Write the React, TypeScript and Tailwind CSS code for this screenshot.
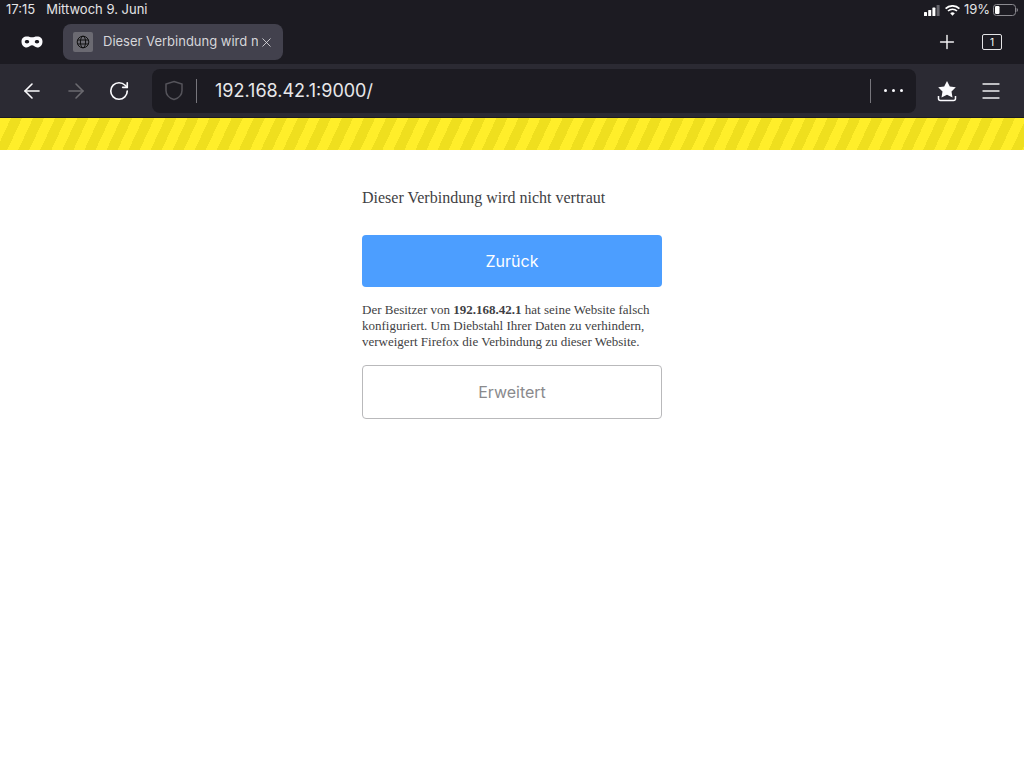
import { ArrowLeft, ArrowRight, Menu, Plus, RotateCw, X } from 'lucide-react';

const uiFont = "font-['Inter','Liberation_Sans',sans-serif]";
const serifFont = "font-['Liberation_Serif',serif]";

function StatusIcons() {
    return (
        <div className="flex items-center">
            {/* signal */}
            <svg width="16" height="11" viewBox="0 0 16 11" className="mr-[5px]">
                <rect x="0" y="7" width="3" height="4" rx="0.6" fill="#fff" />
                <rect x="4.2" y="5" width="3" height="6" rx="0.6" fill="#fff" />
                <rect x="8.4" y="2.6" width="3" height="8.4" rx="0.6" fill="#fff" />
                <rect x="12.6" y="0" width="3" height="11" rx="0.6" fill="#66656c" />
            </svg>
            {/* wifi */}
            <svg width="15" height="11" viewBox="0 0 15 11" className="mr-[4px]">
                <path d="M0.6 3.6a10 10 0 0 1 13.8 0" fill="none" stroke="#fff" strokeWidth="1.7" />
                <path d="M3 6a6.6 6.6 0 0 1 9 0" fill="none" stroke="#fff" strokeWidth="1.7" />
                <path d="M5.2 8.2a3.4 3.4 0 0 1 4.6 0L7.5 10.8z" fill="#fff" />
            </svg>
            <span className="text-[13px] text-[#e4e4e6] mr-[3px]">19%</span>
            {/* battery */}
            <svg width="25" height="12" viewBox="0 0 25 12">
                <rect x="0.5" y="0.5" width="22" height="11" rx="3" fill="none" stroke="#8b8a90" />
                <rect x="2" y="2" width="4.5" height="8" rx="1.2" fill="#fff" />
                <path d="M23.6 4v4c.8-.3 1.3-1.1 1.3-2s-.5-1.700-1.300-2z" fill="#8b8a90" />
            </svg>
        </div>
    );
}

function TopBars() {
    return (
        <header className={`${uiFont} text-white`}>
            {/* status bar + tab strip */}
            <div className="bg-[#1c1b22] h-[64px] flex flex-col">
                <div className="h-[20px] pl-[6px] pr-[6px] flex items-center justify-between text-[13px] text-[#e4e4e6]">
                    <div className="flex gap-[11px]">
                        <span>17:15</span>
                        <span>Mittwoch 9. Juni</span>
                    </div>
                    <StatusIcons />
                </div>
                <div className="flex items-start pt-[4px] pl-[21px] pr-[22px]">
                    <svg width="22" height="12" viewBox="0 0 22 12" className="mt-[12px]">
                        <path
                            fillRule="evenodd"
                            d="M6 .5c2 0 3.500.8 5 .8s3-.8 5-.8c3.500 0 5.500 2 5.500 5 0 3.500-2.200 6-5.200 6-2.300 0-3.700-2.200-5.300-2.200S8 11.500 5.700 11.500C2.700 11.500.5 9 .5 5.500.5 2.500 2.500.5 6 .5zM6 4C4.700 4 3.800 4.700 3.800 5.700S4.800 7.400 6 7.400 8.200 6.700 8.200 5.700 7.300 4 6 4zm10 0c-1.300 0-2.200.7-2.200 1.700s1 1.700 2.200 1.700 2.200-.7 2.200-1.700S17.300 4 16 4z"
                            fill="#fbfbfe"
                        />
                    </svg>
                    <div className="ml-[20px] w-[220px] h-[36px] rounded-[8px] bg-[#42414d] flex items-center pl-[10px] relative overflow-hidden">
                        <div className="w-[20px] h-[20px] rounded-[2px] bg-[#6b6a72] flex items-center justify-center">
                            <svg width="14" height="14" viewBox="0 0 14 14" fill="none" stroke="#111" strokeWidth="1">
                                <circle cx="7" cy="7" r="5.800" />
                                <ellipse cx="7" cy="7" rx="2.600" ry="5.800" />
                                <path d="M1.500 5h11M1.500 9h11" />
                            </svg>
                        </div>
                        <span className="ml-[10px] w-[155px] overflow-hidden whitespace-nowrap text-[13px] text-[#d6d6da]">
                            Dieser Verbindung wird nicht vertraut
                        </span>
                        <X size={15} strokeWidth={1.3} className="text-[#e4e4e6] absolute left-[196px] top-[11px]" />
                    </div>
                    <div className="ml-auto flex items-center gap-[24px] h-[36px]">
                        <Plus size={22} strokeWidth={1.6} className="text-[#f0f0f2]" />
                        <div className="w-[20px] h-[16px] rounded-[2px] border-[1.500px] border-[#e4e4e6] flex items-center justify-center text-[10px] leading-none">
                            1
                        </div>
                    </div>
                </div>
            </div>

            {/* navigation bar */}
            <div className="bg-[#2b2a33] h-[54px] flex items-center pl-[20px] pr-[21px] border-b border-[#1c1b22]">
                <div className="flex items-center gap-[20px] w-[112px]">
                    <ArrowLeft size={24} strokeWidth={1.6} className="text-[#fbfbfe]" />
                    <ArrowRight size={24} strokeWidth={1.6} className="text-[#6b6a70]" />
                    <RotateCw size={22} strokeWidth={1.8} className="text-[#fbfbfe]" />
                </div>
                <div className="ml-[20px] w-[764px] h-[44px] rounded-[8px] bg-[#1c1b22] flex items-center pl-[12px] pr-[12px]">
                    <svg width="20" height="21" viewBox="0 0 20 21" fill="none" stroke="#55545b" strokeWidth="1.500">
                        <path d="M10 1.500l8 2.500v6.500c0 4.300-3.400 7.600-8 9-4.600-1.400-8-4.700-8-9V4z" />
                    </svg>
                    <div className="ml-[12px] w-px h-[24px] bg-[#77767c]" />
                    <span className="ml-[18px] text-[18px] text-[#e8e8ea]">192.168.42.1:9000/</span>
                    <div className="ml-auto w-px h-[24px] bg-[#77767c]" />
                    <div className="ml-[13px] mr-[1px] flex gap-[5px]">
                        <span className="w-[3px] h-[3px] rounded-full bg-[#fbfbfe]" />
                        <span className="w-[3px] h-[3px] rounded-full bg-[#fbfbfe]" />
                        <span className="w-[3px] h-[3px] rounded-full bg-[#fbfbfe]" />
                    </div>
                </div>
                <svg width="20" height="22" viewBox="0 0 20 22" className="ml-[21px]">
                    <path d="M10 1l2.800 5.400 6 .9-4.300 4.200 1 6-5.500-2.800-5.500 2.800 1-6L1.200 7.300l6-.9z" fill="#fbfbfe" />
                    <path d="M1.500 16v2.500c0 1.200.8 2 2 2h13c1.200 0 2-.8 2-2V16" fill="none" stroke="#fbfbfe" strokeWidth="1.500" />
                </svg>
                <Menu size={24} strokeWidth={1.3} className="ml-auto text-[#f0f0f2]" />
            </div>

            {/* private/insecure warning stripes */}
            <div className="h-[32px] bg-[repeating-linear-gradient(115deg,#ffee2a_0px,#ffee2a_10px,#efdf1e_10px,#efdf1e_20px)]" />
        </header>
    );
}

export default function App() {
    return (
        <div className="min-h-[768px] bg-white">
            <TopBars />
            <main className="w-[300px] mx-auto pt-[38px]">
                <h1 className={`${serifFont} text-[16px] leading-[20px] text-[#3f3f44]`}>
                    Dieser Verbindung wird nicht vertraut
                </h1>
                <button className={`${uiFont} mt-[27px] w-full h-[52px] rounded-[4px] bg-[#4c9eff] text-white text-[16px]`}>
                    Zurück
                </button>
                <p className={`${serifFont} mt-[15px] text-[13px] leading-[16px] text-[#3f3f44]`}>
                    Der Besitzer von <b>192.168.42.1</b> hat seine Website falsch konfiguriert. Um Diebstahl Ihrer Daten zu verhindern, verweigert Firefox die Verbindung zu dieser Website.
                </p>
                <button className={`${uiFont} mt-[15px] w-full h-[54px] rounded-[4px] border border-[#b9b9bb] bg-white text-[#8a8a8d] text-[16px]`}>
                    Erweitert
                </button>
            </main>
        </div>
    );
}
